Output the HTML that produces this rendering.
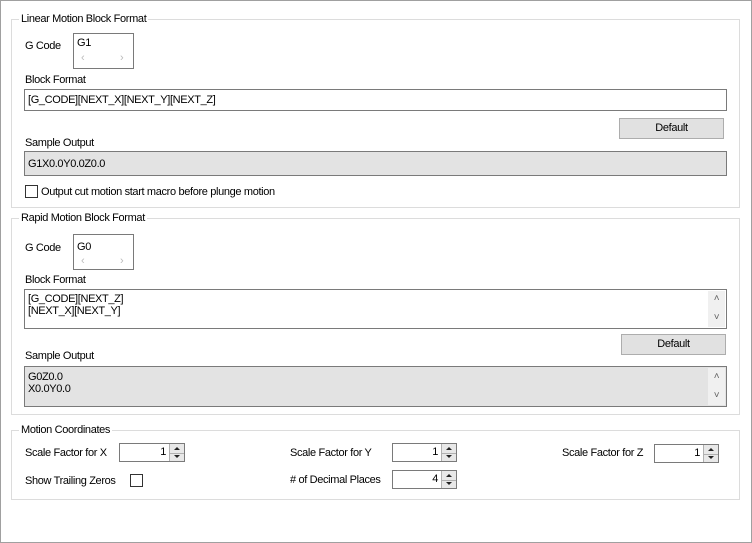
<!DOCTYPE html>
<html><head><style>
*{margin:0;padding:0;box-sizing:border-box}
body{width:752px;height:543px;background:#fff;font-family:"Liberation Sans",Arial,sans-serif;font-size:11px;letter-spacing:-0.35px;color:#000;position:relative;overflow:hidden}
.frame{position:absolute;left:0;top:0;width:752px;height:543px;border:1px solid #a0a0a0}
.grp{position:absolute;border:1px solid #dcdcdc}
.ttl{position:absolute;background:#fff;padding:0 2px;line-height:12px}
.lbl{position:absolute;line-height:12px;white-space:nowrap}
.box{position:absolute;border:1px solid #7a7a7a;background:#fff}
.gray{background:#e3e3e3}
.btn{position:absolute;border:1px solid #adadad;background:#e1e1e1;text-align:center;line-height:19px}
.sb{position:absolute;right:1px;top:1px;bottom:1px;width:17px;background:#f0f0f0;color:#606060;font-size:10px;text-align:center}
.spin{position:absolute;border:1px solid #7a7a7a;background:#fff;text-align:right;padding-right:18px;line-height:17px}
.spin .ar{position:absolute;right:0;top:0;width:15px;height:100%;background:#e8e8e8;border-left:1px solid #b0b0b0}
.spin .ar:before{content:"";position:absolute;left:4px;top:3px;border:3px solid transparent;border-bottom:3px solid #222;border-top:none}
.spin .ar:after{content:"";position:absolute;left:4px;bottom:3px;border:3px solid transparent;border-top:3px solid #222;border-bottom:none}
.spin .ar i{position:absolute;left:0;right:0;top:50%;border-top:1px solid #b0b0b0}
.chk{position:absolute;width:13px;height:13px;border:1px solid #333;background:#fff}
</style></head><body>
<div class="frame"></div>

<div class="grp" style="left:11px;top:19px;width:729px;height:189px"></div>
<div class="ttl" style="left:19px;top:13px">Linear Motion Block Format</div>
<div class="lbl" style="left:25px;top:40px">G Code</div>
<div class="box" style="left:73px;top:33px;width:61px;height:36px"><div class="lbl" style="left:3px;top:3px">G1</div><div class="lbl" style="left:7px;top:18px;color:#bbb">&lsaquo;</div><div class="lbl" style="left:46px;top:18px;color:#bbb">&rsaquo;</div></div>
<div class="lbl" style="left:25px;top:74px">Block Format</div>
<div class="box" style="left:24px;top:89px;width:703px;height:22px"><div class="lbl" style="left:3px;top:4px">[G_CODE][NEXT_X][NEXT_Y][NEXT_Z]</div></div>
<div class="btn" style="left:619px;top:118px;width:105px;height:21px">Default</div>
<div class="lbl" style="left:25px;top:137px">Sample Output</div>
<div class="box gray" style="left:24px;top:151px;width:703px;height:25px"><div class="lbl" style="left:3px;top:6px">G1X0.0Y0.0Z0.0</div></div>
<div class="chk" style="left:25px;top:185px"></div>
<div class="lbl" style="left:41px;top:186px">Output cut motion start macro before plunge motion</div>

<div class="grp" style="left:11px;top:218px;width:729px;height:197px"></div>
<div class="ttl" style="left:19px;top:212px">Rapid Motion Block Format</div>
<div class="lbl" style="left:25px;top:242px">G Code</div>
<div class="box" style="left:73px;top:234px;width:61px;height:36px"><div class="lbl" style="left:3px;top:6px">G0</div><div class="lbl" style="left:7px;top:20px;color:#bbb">&lsaquo;</div><div class="lbl" style="left:46px;top:20px;color:#bbb">&rsaquo;</div></div>
<div class="lbl" style="left:25px;top:274px">Block Format</div>
<div class="box" style="left:24px;top:289px;width:703px;height:40px"><div class="lbl" style="left:3px;top:3px">[G_CODE][NEXT_Z]</div><div class="lbl" style="left:3px;top:15px">[NEXT_X][NEXT_Y]</div><div class="sb"><div style="margin-top:2px">&#708;</div><div style="margin-top:8px">&#709;</div></div></div>
<div class="btn" style="left:621px;top:334px;width:105px;height:21px">Default</div>
<div class="lbl" style="left:25px;top:350px">Sample Output</div>
<div class="box gray" style="left:24px;top:366px;width:703px;height:41px"><div class="lbl" style="left:3px;top:4px">G0Z0.0</div><div class="lbl" style="left:3px;top:16px">X0.0Y0.0</div><div class="sb"><div style="margin-top:3px">&#708;</div><div style="margin-top:8px">&#709;</div></div></div>

<div class="grp" style="left:11px;top:430px;width:729px;height:70px"></div>
<div class="ttl" style="left:19px;top:424px">Motion Coordinates</div>
<div class="lbl" style="left:25px;top:447px">Scale Factor for X</div>
<div class="spin" style="left:119px;top:443px;width:66px;height:19px">1<div class="ar"><i></i></div></div>
<div class="lbl" style="left:290px;top:447px">Scale Factor for Y</div>
<div class="spin" style="left:392px;top:443px;width:65px;height:19px">1<div class="ar"><i></i></div></div>
<div class="lbl" style="left:562px;top:447px">Scale Factor for Z</div>
<div class="spin" style="left:654px;top:444px;width:65px;height:19px">1<div class="ar"><i></i></div></div>
<div class="lbl" style="left:25px;top:475px">Show Trailing Zeros</div>
<div class="chk" style="left:130px;top:474px"></div>
<div class="lbl" style="left:290px;top:474px"># of Decimal Places</div>
<div class="spin" style="left:392px;top:470px;width:65px;height:19px">4<div class="ar"><i></i></div></div>
</body></html>
